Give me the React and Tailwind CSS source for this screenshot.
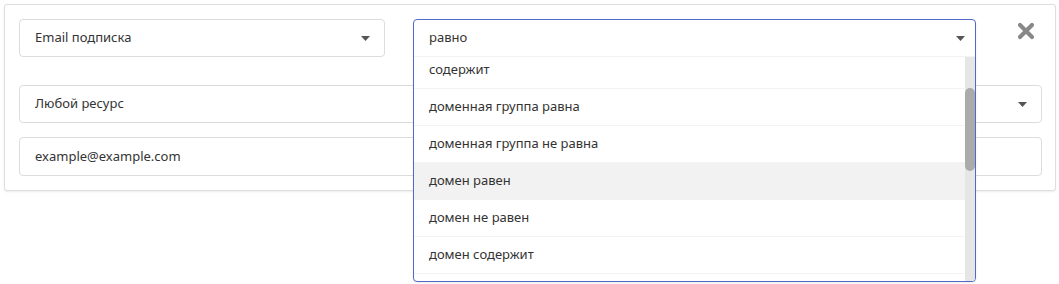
import { useState } from 'react'

const FONT = "font-['Noto_Sans',sans-serif]"

const OPTIONS = [
  'содержит',
  'доменная группа равна',
  'доменная группа не равна',
  'домен равен',
  'домен не равен',
  'домен содержит',
]

function Caret() {
  return (
    <svg width="9" height="5" viewBox="0 0 9 5" className="shrink-0">
      <path d="M0 0h9L4.5 5z" fill="#555" />
    </svg>
  )
}

function SelectBox({ label, className = '' }) {
  return (
    <div
      className={`flex h-[38px] items-center justify-between rounded-[4px] border border-[#dcdcdc] bg-white pl-[15px] pr-[14px] text-[13px] text-[#333] ${className}`}
    >
      <span>{label}</span>
      <Caret />
    </div>
  )
}

function OpenSelect() {
  const [hover] = useState('домен равен')
  return (
    <div className="relative h-[38px] w-[563px]">
      <div className="absolute left-0 top-0 z-10 w-full overflow-hidden rounded-[4px] border border-[#5468c8] bg-white shadow-[0_1px_2px_rgba(0,0,0,0.08)]">
        <div className="flex h-[37px] items-center justify-between border-b border-[#f3f3f3] pl-[15px] pr-[10px] text-[13px] text-[#333]">
          <span>равно</span>
          <Caret />
        </div>
        <div className="relative h-[224px] overflow-hidden">
          <div className="-mt-[5px] pr-[10px]">
            {OPTIONS.map((o) => (
              <div
                key={o}
                className={`flex h-[37px] items-center border-b border-[#f3f3f3] pl-[15px] text-[13px] text-[#333] ${
                  o === hover ? 'bg-[#f2f2f2]' : 'bg-white'
                }`}
              >
                {o}
              </div>
            ))}
          </div>
          <div className="absolute right-0 top-0 h-full w-[10px] bg-[#e6e6e6]">
            <div className="mt-[31px] h-[83px] w-[10px] rounded-[5px] bg-[#ababab]" />
          </div>
        </div>
      </div>
    </div>
  )
}

function CloseIcon() {
  return (
    <svg width="18" height="18" viewBox="0 0 18 18">
      <path d="M3 3L15 15M15 3L3 15" stroke="#888" strokeWidth="4.2" strokeLinecap="round" />
    </svg>
  )
}

export default function App() {
  return (
    <div className={`min-h-[284px] bg-white pl-[4px] pr-[3px] pt-[4px] ${FONT}`}>
      <div className="rounded-[3px] border border-[#dedede] bg-white pb-[14px] pl-[14px] pr-[13px] pt-[14px] shadow-[0_1px_2px_rgba(0,0,0,0.08)]">
        <div className="flex items-start">
          <SelectBox label="Email подписка" className="w-[366px]" />
          <div className="ml-[28px]">
            <OpenSelect />
          </div>
          <div className="ml-[41px] mt-[3px]">
            <CloseIcon />
          </div>
        </div>
        <div className="mt-[28px] flex flex-col gap-[14px]">
          <SelectBox label="Любой ресурс" />
          <div className="flex h-[39px] items-center rounded-[4px] border border-[#dcdcdc] bg-white pl-[15px] text-[13px] text-[#333]">
            example@example.com
          </div>
        </div>
      </div>
    </div>
  )
}
